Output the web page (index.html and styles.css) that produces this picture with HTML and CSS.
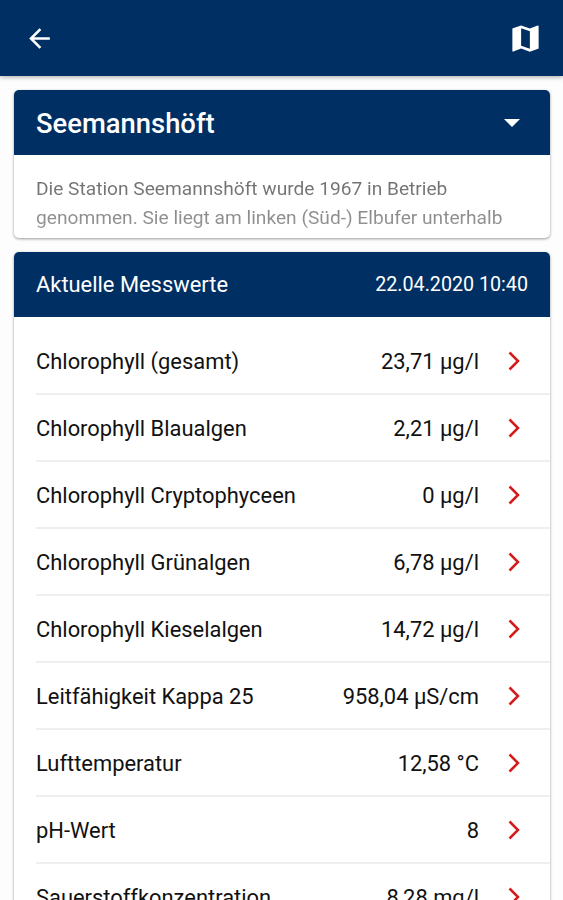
FILE: index.html
```
<!DOCTYPE html>
<html lang="de">
<head>
    <meta charset="UTF-8">
    <meta name="viewport" content="width=device-width, initial-scale=1.0">
    <title>Seemannshöft</title>
    <link rel="stylesheet" href="styles.css">
</head>
<body>
    <header class="toolbar">
        <svg class="icon-back" viewBox="0 0 24 24"><path d="M20 11H7.83l5.59-5.59L12 4l-8 8 8 8 1.41-1.41L7.83 13H20v-2z"/></svg>
        <svg class="icon-map" viewBox="0 0 24 24"><path d="M20.5 3l-.16.03L15 5.1 9 3 3.36 4.9c-.21.07-.36.25-.36.48V20.5c0 .28.22.5.5.5l.16-.03L9 18.9l6 2.1 5.64-1.9c.21-.07.36-.25.36-.48V3.5c0-.28-.22-.5-.5-.5zM15 19l-6-2.11V5l6 2.11V19z"/></svg>
    </header>

    <main>
        <section class="card station">
            <div class="card-header">
                <h1>Seemannshöft</h1>
                <svg class="icon-dropdown" viewBox="0 0 16 8"><path d="M0 0h16L8 8z"/></svg>
            </div>
            <p class="description">Die Station Seemannshöft wurde 1967 in Betrieb<br>genommen. Sie liegt am linken (Süd-) Elbufer unterhalb</p>
        </section>

        <section class="card">
            <div class="card-header">
                <h2>Aktuelle Messwerte</h2>
                <span class="date">22.04.2020 10:40</span>
            </div>
            <ul class="values">
                <li><span>Chlorophyll (gesamt)</span><span class="value">23,71 µg/l</span><svg class="chevron" viewBox="0 0 12 20"><path d="M1.5 1.5L10 10l-8.5 8.5"/></svg></li>
                <li><span>Chlorophyll Blaualgen</span><span class="value">2,21 µg/l</span><svg class="chevron" viewBox="0 0 12 20"><path d="M1.5 1.5L10 10l-8.5 8.5"/></svg></li>
                <li><span>Chlorophyll Cryptophyceen</span><span class="value">0 µg/l</span><svg class="chevron" viewBox="0 0 12 20"><path d="M1.5 1.5L10 10l-8.5 8.5"/></svg></li>
                <li><span>Chlorophyll Grünalgen</span><span class="value">6,78 µg/l</span><svg class="chevron" viewBox="0 0 12 20"><path d="M1.5 1.5L10 10l-8.5 8.5"/></svg></li>
                <li><span>Chlorophyll Kieselalgen</span><span class="value">14,72 µg/l</span><svg class="chevron" viewBox="0 0 12 20"><path d="M1.5 1.5L10 10l-8.5 8.5"/></svg></li>
                <li><span>Leitfähigkeit Kappa 25</span><span class="value">958,04 µS/cm</span><svg class="chevron" viewBox="0 0 12 20"><path d="M1.5 1.5L10 10l-8.5 8.5"/></svg></li>
                <li><span>Lufttemperatur</span><span class="value">12,58 °C</span><svg class="chevron" viewBox="0 0 12 20"><path d="M1.5 1.5L10 10l-8.5 8.5"/></svg></li>
                <li><span>pH-Wert</span><span class="value">8</span><svg class="chevron" viewBox="0 0 12 20"><path d="M1.5 1.5L10 10l-8.5 8.5"/></svg></li>
                <li><span>Sauerstoffkonzentration</span><span class="value">8,28 mg/l</span><svg class="chevron" viewBox="0 0 12 20"><path d="M1.5 1.5L10 10l-8.5 8.5"/></svg></li>
            </ul>
        </section>
    </main>
</body>
</html>
```
FILE: styles.css
```
* {
    box-sizing: border-box;
}
body {
    margin: 0;
    height: 900px;
    overflow: hidden;
    background-color: #fdfdfd;
    font-family: Roboto, sans-serif;
    color: #111;
}
.toolbar {
    height: 76px;
    padding: 0 20px 0 24px;
    display: flex;
    align-items: center;
    justify-content: space-between;
    background-color: #003063;
    box-shadow: 0 1px 5px rgba(0,0,0,0.35);
}
.toolbar svg {
    fill: #fff;
}
.icon-back {
    width: 31px;
    height: 31px;
}
.icon-map {
    width: 35px;
    height: 35px;
}
main {
    padding: 14px 13px 0 14px;
}
.card {
    margin-bottom: 14px;
    border-radius: 5px;
    background-color: #fff;
    box-shadow: 0 1px 3px rgba(0,0,0,0.4);
    overflow: hidden;
}
.station {
    height: 148px;
}
.card-header {
    height: 65px;
    padding: 0 22px;
    display: flex;
    align-items: center;
    justify-content: space-between;
    background-color: #003063;
    color: #fff;
}
h1 {
    margin: 0;
    padding-top: 2px;
    font-size: 27.4px;
    font-weight: 500;
}
h2 {
    margin: 0;
    font-size: 21.9px;
    font-weight: 400;
}
.icon-dropdown {
    width: 16px;
    height: 8px;
    margin-right: 8px;
    fill: #fff;
}
.date {
    font-size: 19.7px;
}
.description {
    margin: 0;
    padding: 20px 22px 0;
    font-size: 19.15px;
    line-height: 28.5px;
    white-space: nowrap;
    color: transparent;
    background: linear-gradient(#707070 30px, #a0a0a0 83px);
    background-clip: text;
    -webkit-background-clip: text;
}
.values {
    margin: 0;
    padding: 11px 0 0 22px;
    list-style: none;
    font-size: 21.9px;
}
.values li {
    height: 67px;
    padding-right: 30px;
    display: flex;
    align-items: center;
    border-bottom: 2px solid #efefef;
}
.values span {
    padding-top: 2px;
}
.value {
    margin-left: auto;
}
.chevron {
    width: 12px;
    height: 20px;
    margin-left: 29px;
    fill: none;
    stroke: #d51c1c;
    stroke-width: 2.5;
}
```
